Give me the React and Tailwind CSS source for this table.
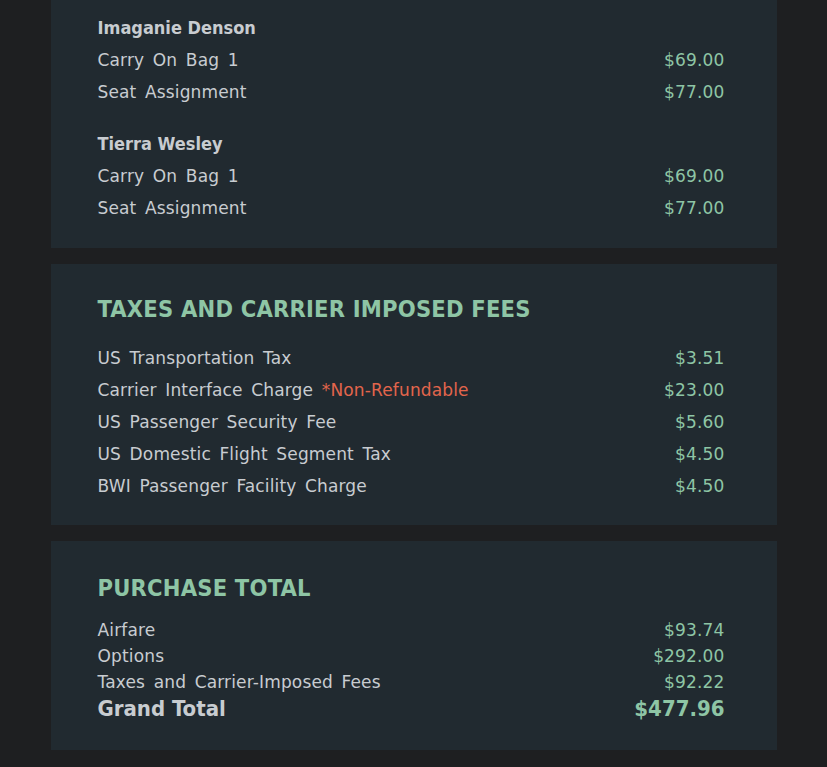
import React from 'react';

const font = { fontFamily: '"DejaVu Sans", Verdana, sans-serif' };
// headings and totals use the narrower bold face
const bold = { fontFamily: '"DejaVu Sans Condensed", "DejaVu Sans", sans-serif' };

const passengers = [
  {
    name: 'Imaganie Denson',
    items: [
      { label: 'Carry On Bag 1', amount: '$69.00' },
      { label: 'Seat Assignment', amount: '$77.00' },
    ],
  },
  {
    name: 'Tierra Wesley',
    items: [
      { label: 'Carry On Bag 1', amount: '$69.00' },
      { label: 'Seat Assignment', amount: '$77.00' },
    ],
  },
];

const taxes = [
  { label: 'US Transportation Tax', amount: '$3.51' },
  { label: 'Carrier Interface Charge', note: '*Non-Refundable', amount: '$23.00' },
  { label: 'US Passenger Security Fee', amount: '$5.60' },
  { label: 'US Domestic Flight Segment Tax', amount: '$4.50' },
  { label: 'BWI Passenger Facility Charge', amount: '$4.50' },
];

const totals = [
  { label: 'Airfare', amount: '$93.74' },
  { label: 'Options', amount: '$292.00' },
  { label: 'Taxes and Carrier-Imposed Fees', amount: '$92.22' },
];

// Single label / price row
const Row = ({ label, note, amount, tight }) => (
  <div className={`flex justify-between items-center text-[17px] tracking-[0.15px] [word-spacing:3px] ${tight ? 'leading-[26px]' : 'leading-[32px]'}`}>
    <span className="text-[#c8ccd0]">
      {label}
      {note && <span className="text-[#e2654c]"> {note}</span>}
    </span>
    <span className="text-[#8ec5a5]">{amount}</span>
  </div>
);

const Card = ({ children, className }) => (
  <div className={`w-[726px] mx-auto bg-[#212a30] pl-[47px] pr-[52px] ${className}`}>
    {children}
  </div>
);

const Heading = ({ children, className }) => (
  <h2 style={bold} className={`text-[23.5px] leading-[32px] font-bold text-[#8ec5a5] tracking-[0.2px] ${className}`}>
    {children}
  </h2>
);

export default function App() {
  return (
    <div style={font} className="min-h-screen bg-[#1e1f21] pb-[17px] flex flex-col gap-4">
      <Card className="pt-[12px] pb-[24px]">
        {passengers.map((p, i) => (
          <div key={p.name} className={i > 0 ? 'mt-[20px]' : ''}>
            <div style={bold} className="text-[18px] leading-[32px] font-bold text-[#c8ccd0]">{p.name}</div>
            {p.items.map((it) => (
              <Row key={it.label} {...it} />
            ))}
          </div>
        ))}
      </Card>

      <Card className="pt-[29px] pb-[23px]">
        <Heading className="mb-[17px]">TAXES AND CARRIER IMPOSED FEES</Heading>
        {taxes.map((t) => (
          <Row key={t.label} {...t} />
        ))}
      </Card>

      <Card className="pt-[31px] pb-[27px]">
        <Heading className="mb-[13px]">PURCHASE TOTAL</Heading>
        {totals.map((t) => (
          <Row key={t.label} {...t} tight />
        ))}
        <div style={bold} className="flex justify-between items-center leading-[28px] font-bold text-[22px]">
          <span className="text-[#c8ccd0]">Grand Total</span>
          <span className="text-[#8ec5a5]">$477.96</span>
        </div>
      </Card>
    </div>
  );
}
